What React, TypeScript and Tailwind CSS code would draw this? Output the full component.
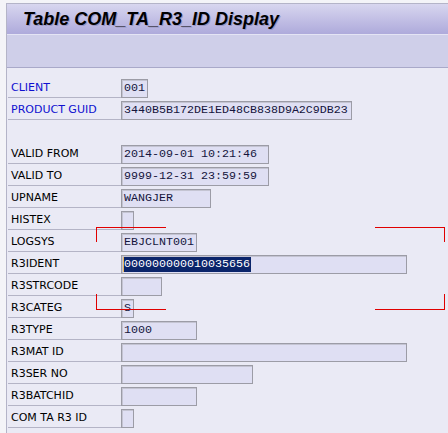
import React from "react";

type Row = {
  label: string;
  value?: string;
  width?: number;
  key?: boolean;
  selected?: boolean;
  blank?: boolean;
};

const rows: Row[] = [
  { label: "CLIENT", value: "001", width: 27, key: true },
  { label: "PRODUCT GUID", value: "3440B5B172DE1ED48CB838D9A2C9DB23", width: 231, key: true },
  { label: "", blank: true },
  { label: "VALID FROM", value: "2014-09-01 10:21:46", width: 148 },
  { label: "VALID TO", value: "9999-12-31 23:59:59", width: 148 },
  { label: "UPNAME", value: "WANGJER", width: 90 },
  { label: "HISTEX", value: "", width: 13 },
  { label: "LOGSYS", value: "EBJCLNT001", width: 76 },
  { label: "R3IDENT", value: "000000000010035656", width: 286, selected: true },
  { label: "R3STRCODE", value: "", width: 41 },
  { label: "R3CATEG", value: "S", width: 13 },
  { label: "R3TYPE", value: "1000", width: 76 },
  { label: "R3MAT ID", value: "", width: 286 },
  { label: "R3SER NO", value: "", width: 132 },
  { label: "R3BATCHID", value: "", width: 76 },
  { label: "COM TA R3 ID", value: "", width: 13 },
];

const mono = "font-['Liberation_Mono','Courier_New',monospace] text-[11.67px]";

const Field = ({ row }: { row: Row }) => (
  <div
    className="h-[19px] mt-[3px] bg-[#dfdff3] border border-[#9c9ca6] shadow-[inset_1px_1px_0_#c4c4d2] flex items-center overflow-hidden"
    style={{ width: row.width }}
  >
    {row.selected ? (
      <span className={`${mono} ml-[1px] h-[15px] leading-[15px] bg-[#0a246a] text-white pr-[1px] flex`}>
        <span className="w-[1px] h-[15px] bg-[#e8b860]" />
        {row.value}
      </span>
    ) : (
      <span className={`${mono} pl-[2px] leading-[17px] text-[#14143c] whitespace-pre`}>{row.value}</span>
    )}
  </div>
);

export default function App() {
  return (
    <div className="w-[448px] h-[433px] bg-[#f4f4f8] pt-[3px] pl-[6px] overflow-hidden relative">
      <div className="h-full border-l border-t border-[#b4b4c8] flex flex-col">
        <div className="h-[30px] shrink-0 bg-gradient-to-b from-[#d8d6ef] to-[#aeaadb] flex items-center pl-[16px]">
          <span className="font-['Liberation_Sans',Arial,sans-serif] font-bold italic text-[18px] text-black [text-shadow:1px_1px_0_#9896c4]">
            Table COM_TA_R3_ID Display
          </span>
        </div>
        <div className="h-[34px] shrink-0 bg-[#cfcfe9] border-t border-[#e4e4f4] border-b border-b-[#a9a9c9]" />
        <div className="flex-1 bg-[#eaeaf5] pt-[8px] pl-[1px]">
          {rows.map((row, i) => (
            <div key={i} className="flex h-[22px]">
              {row.blank ? null : (
                <>
                  <div
                    className={`w-[113px] h-[22px] border-b border-[#b4b4c6] pl-[3px] pt-[3px] leading-[18px] font-['DejaVu_Sans',Verdana,sans-serif] text-[11px] ${
                      row.key ? "text-[#1010d0]" : "text-black"
                    }`}
                  >
                    {row.label}
                  </div>
                  <Field row={row} />
                </>
              )}
            </div>
          ))}
        </div>
      </div>

      {/* red bracket annotations */}
      <div className="absolute left-[96px] top-[227px] w-[70px] h-[15px] border-l border-t border-[#e00000]" />
      <div className="absolute left-[96px] top-[294px] w-[70px] h-[16px] border-l border-b border-[#e00000]" />
      <div className="absolute left-[375px] top-[227px] w-[70px] h-[15px] border-r border-t border-[#e00000]" />
      <div className="absolute left-[375px] top-[294px] w-[70px] h-[16px] border-r border-b border-[#e00000]" />
    </div>
  );
}
